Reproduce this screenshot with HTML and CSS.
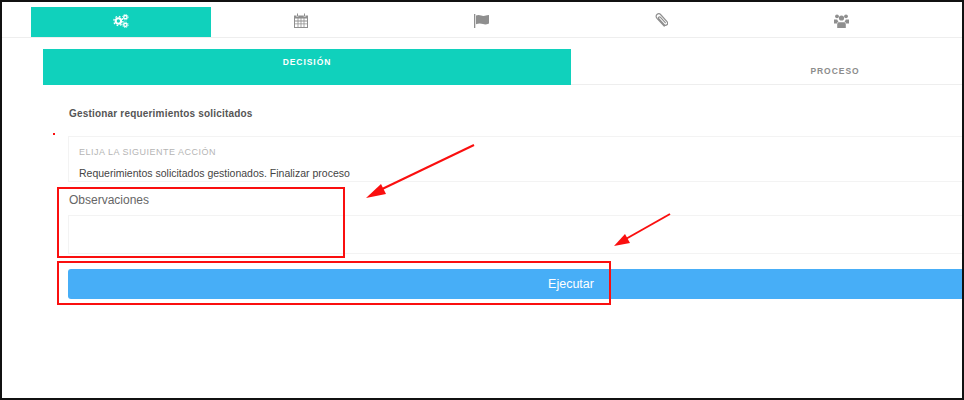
FILE: index.html
```html
<!DOCTYPE html>
<html lang="en">
<head>
<meta charset="UTF-8">
<meta name="viewport" content="width=device-width, initial-scale=1.0">
<title>Gestionar requerimientos</title>
<link rel="stylesheet" href="styles.css">
</head>
<body>
<div class="frame">
  <nav class="icon-tabs">
    <div class="icon-tab active">
      <svg class="icon" viewBox="0 0 18 16" width="16" height="14">
        <g fill="none" stroke="currentColor">
          <circle cx="6" cy="8" r="3.1" stroke-width="2.4"/>
          <circle cx="6" cy="8" r="5.2" stroke-width="1.5" stroke-dasharray="1.9 2.18"/>
          <circle cx="14" cy="3.6" r="1.9" stroke-width="1.6"/>
          <circle cx="14" cy="3.6" r="3.2" stroke-width="1" stroke-dasharray="1.3 1.2"/>
          <circle cx="14" cy="12.4" r="1.9" stroke-width="1.6"/>
          <circle cx="14" cy="12.4" r="3.2" stroke-width="1" stroke-dasharray="1.3 1.2"/>
        </g>
      </svg>
    </div>
    <div class="icon-tab">
      <svg class="icon" viewBox="0 0 14 15" width="14" height="15">
        <path fill="currentColor" fill-rule="evenodd" d="M0 2.5h2.6V4h1.6V2.5h5.6V4h1.6V2.5H14V15H0zM1 5.6V7.6h2.6V5.6zM4.4 5.6V7.6h2.2V5.6zM7.4 5.6V7.6h2.2V5.6zM10.4 5.6V7.6H13V5.6zM1 8.4v2.1h2.6V8.4zM4.4 8.4v2.1h2.2V8.4zM7.4 8.4v2.1h2.2V8.4zM10.4 8.4v2.1H13V8.4zM1 11.3V14h2.6v-2.7zM4.4 11.3V14h2.2v-2.7zM7.4 11.3V14h2.2v-2.7zM10.4 11.3V14H13v-2.7z"/>
        <rect x="3" y="0.5" width="1" height="3" fill="currentColor"/>
        <rect x="10" y="0.5" width="1" height="3" fill="currentColor"/>
      </svg>
    </div>
    <div class="icon-tab">
      <svg class="icon" viewBox="0 0 15 14" width="15" height="14">
        <rect x="0" y="0" width="1.3" height="14" fill="currentColor"/>
        <path fill="currentColor" d="M2 1.6c2-1 3.6-.6 5.2 0s3.300.4 5.800-.4L15 1v8.600c-2.400 1-4.200 1.200-6 .5S4.200 9.300 2 10.200z"/>
      </svg>
    </div>
    <div class="icon-tab">
      <svg class="icon" viewBox="0 0 13 15" width="13" height="15">
        <path fill="none" stroke="currentColor" stroke-width="1.200" stroke-linecap="round" d="M9.200 13.200 2 5.400C.6 3.800 1 2.200 2.200 1.300s2.600-.6 3.800.7l6 6.600c1 1.200.8 2.400-.1 3.200s-2 .7-2.900-.3L3.800 5.700c-.5-.6-.4-1.200 0-1.600s1-.4 1.500.1l5 5.500"/>
      </svg>
    </div>
    <div class="icon-tab">
      <svg class="icon" viewBox="0 0 15 14" width="15" height="14">
        <g fill="currentColor">
          <circle cx="3" cy="2.300" r="1.900"/>
          <circle cx="12" cy="2.300" r="1.900"/>
          <circle cx="7.500" cy="4" r="2.600"/>
          <path d="M0 5.400h3.200c.3 1 .8 1.800 1.300 2.200-.8.400-1.300 1-1.500 1.900H0z"/>
          <path d="M15 5.400h-3.200c-.3 1-.8 1.800-1.300 2.200.8.400 1.300 1 1.500 1.900H15z"/>
          <path d="M4.300 8.300h6.400c.8.500 1.100 1.500 1.100 2.700V14H3.200v-3c0-1.200.3-2.200 1.100-2.700z"/>
        </g>
      </svg>
    </div>
  </nav>

  <div class="sub-tabs">
    <div class="sub-tab active">DECISIÓN</div>
    <div class="sub-tab">PROCESO</div>
  </div>

  <form class="task-form">
    <h2 class="task-title">Gestionar requerimientos solicitados</h2>
    <div class="select-box">
      <div class="select-label">ELIJA LA SIGUIENTE ACCIÓN</div>
      <div class="select-value">Requerimientos solicitados gestionados. Finalizar proceso</div>
    </div>
    <label class="obs-label" for="obs">Observaciones</label>
    <textarea class="obs-input" id="obs"></textarea>
    <button type="button" class="btn-run">Ejecutar</button>
  </form>

  <!-- red marks drawn over the screenshot -->
  <svg class="marks" width="964" height="400" viewBox="0 0 964 400">
    <g fill="none" stroke="#fa0f0f" stroke-width="2">
      <rect x="58" y="188" width="286" height="69"/>
      <rect x="58" y="262" width="552" height="42"/>
    </g>
    <g stroke="#fa0f0f" stroke-width="2">
      <line x1="474" y1="145" x2="378" y2="191"/>
      <line x1="670" y1="214" x2="624" y2="240"/>
    </g>
    <g fill="#fa0f0f">
      <polygon points="366,198 381,184 386,194"/>
      <polygon points="614,246 625,234 630,243"/>
      <rect x="53" y="133" width="2" height="2"/>
    </g>
  </svg>
</div>
</body>
</html>
```

FILE: styles.css
```css
* {
  box-sizing: border-box;
}

html, body {
  margin: 0;
  padding: 0;
  background-color: #fff;
}

body {
  font-family: 'Liberation Sans', Arial, sans-serif;
  color: #555;
}

.frame {
  position: relative;
  width: 964px;
  height: 400px;
  padding-top: 5px;
  border: 2px solid #111;
  overflow: hidden;
}

/* top icon row */
.icon-tabs {
  display: flex;
  height: 31px;
  padding-left: 29px;
  border-bottom: 1px solid #eee;
}

.icon-tab {
  flex: 0 0 180px;
  display: flex;
  align-items: center;
  justify-content: center;
  padding-bottom: 3px;
  color: #8f8f8f;
}

.icon-tab.active {
  background-color: #10d1bc;
  color: #fff;
}

/* second row */
.sub-tabs {
  display: flex;
  width: 1056px;
  height: 36px;
  margin: 11px 0 0 41px;
  border-bottom: 1px solid #eee;
}

.sub-tab {
  flex: 0 0 528px;
  padding-top: 17px;
  text-align: center;
  font-size: 8.500px;
  line-height: 11px;
  font-weight: bold;
  letter-spacing: 0.950px;
  color: #8c8c8c;
}

.sub-tab.active {
  margin-bottom: -1px;
  padding-top: 8px;
  background-color: #10d1bc;
  color: #fff;
}

/* form */
.task-form {
  width: 1006px;
  margin-left: 66px;
}

.task-title {
  margin: 22px 0 15px 1px;
  font-size: 10px;
  line-height: 14px;
  font-weight: bold;
  letter-spacing: 0.190px;
  color: #555;
}

.select-box {
  height: 46px;
  padding: 9px 10px 0;
  border: 1px solid #f3f3f3;
}

.select-label {
  font-size: 9px;
  line-height: 12px;
  letter-spacing: 0.500px;
  color: #b5b5b5;
}

.select-value {
  margin-top: 8px;
  font-size: 10.500px;
  line-height: 14px;
  color: #444;
}

.obs-label {
  display: block;
  margin: 11px 0 0 1px;
  font-size: 12px;
  line-height: 15px;
  color: #666;
}

.obs-input {
  display: block;
  width: 100%;
  height: 39px;
  margin-top: 7px;
  border: 1px solid #f3f3f3;
  resize: none;
  outline: none;
}

.btn-run {
  display: block;
  width: 100%;
  height: 30px;
  margin-top: 15px;
  padding: 0;
  border: none;
  border-radius: 3px;
  background-color: #47aef7;
  color: #fff;
  font-family: inherit;
  font-size: 12.500px;
}

.marks {
  position: absolute;
  top: -2px;
  left: -2px;
  pointer-events: none;
}
```
